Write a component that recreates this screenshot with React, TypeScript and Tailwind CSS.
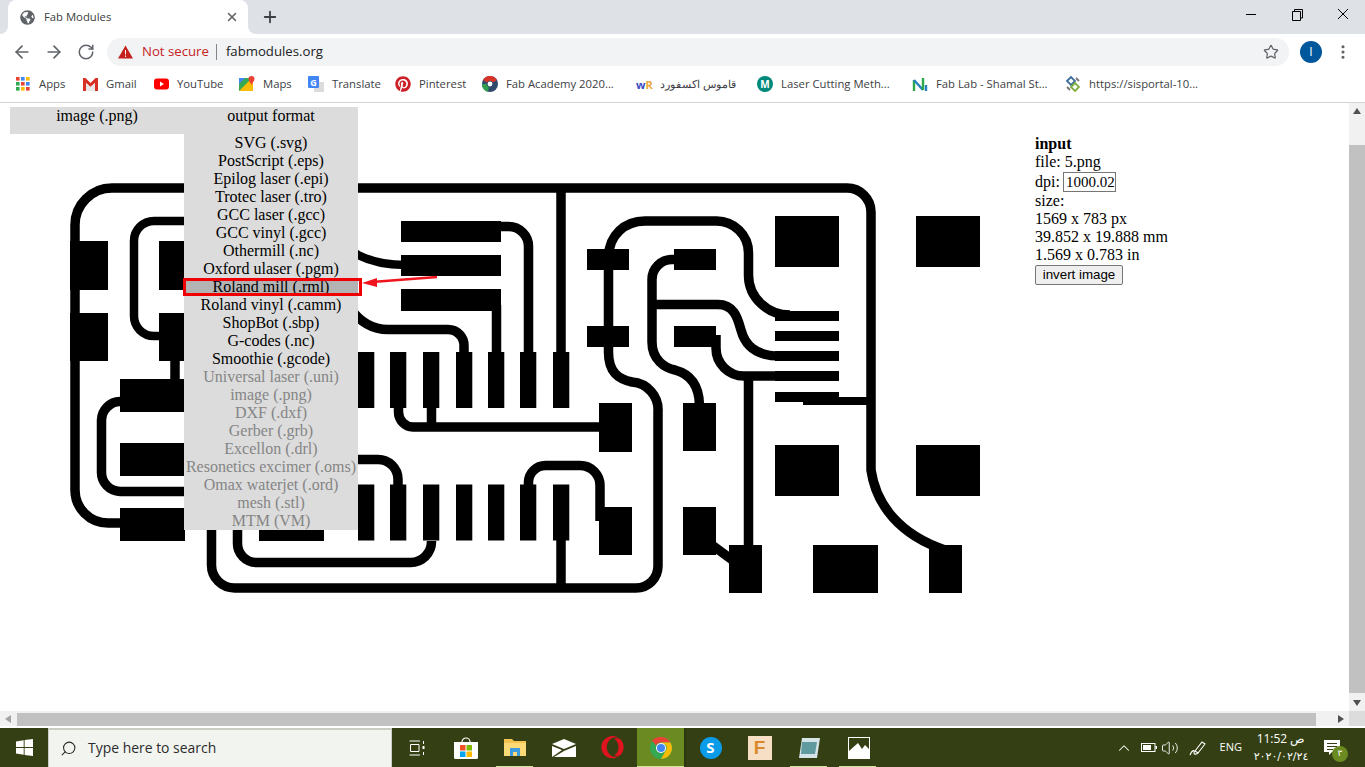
import { ArrowLeft, ArrowRight, ChevronUp, EllipsisVertical, Plus, RotateCw, Search, Star, Volume2, X } from "lucide-react";
import { FaGlobeAmericas, FaOpera, FaPinterest } from "react-icons/fa";

// ─── Board artwork ───────────────────────────────────────────────────────────

const pads: [number, number, number, number][] = [
  [70, 241, 38, 49], [70, 313, 38, 48], [159, 241, 50, 49], [159, 313, 50, 48],
  [120, 379, 66, 33], [120, 443, 66, 33], [120, 508, 65, 33],
  [401, 221, 100, 21], [401, 255, 100, 21], [401, 289, 100, 22],
  [587, 249, 42, 21], [587, 326, 42, 21], [674, 249, 42, 21], [674, 326, 42, 21],
  [599, 403, 33, 49], [599, 507, 33, 48], [683, 403, 33, 48], [683, 507, 33, 48],
  [775, 216, 64, 51], [916, 216, 64, 51], [775, 445, 64, 51], [916, 445, 64, 51],
  [775, 311, 64, 10], [775, 331, 64, 10], [775, 351, 64, 10], [775, 371, 64, 10], [775, 392, 64, 10],
  [803, 397, 64, 8],
  [729, 545, 33, 48], [813, 545, 65, 48], [929, 545, 33, 48],
  [259, 500, 65, 41],
];

const pinColumns = [358, 390, 423, 456, 488, 520, 553];

const traces = [
  "M75 361 V225 A37 37 0 0 1 112 188 H847 A24 24 0 0 1 871 212 V470 C876 505 900 535 945 550",
  "M75 361 V490 A33 33 0 0 0 108 523 H125",
  "M175 355 V385",
  "M125 401.5 H120 A19 19 0 0 0 101.5 420 V472 A19 19 0 0 0 120 491.5 H300 V459.5 H378 A20 20 0 0 1 398 479 V490",
  "M211.5 525 V565 A23 23 0 0 0 234.5 588 H636 A22 22 0 0 0 658 566 V412 A28 28 0 0 0 632 382 C618 379 608.5 372 608.5 352 V258 C608.5 235 625 221 645 221 H716 A32 32 0 0 1 748.5 253 V275 C748.5 298 768 315 790 315",
  "M237.5 525 V543 A19 19 0 0 0 256.5 562.5 H410 A21 21 0 0 0 431.5 541",
  "M501 226.5 H508 A20 20 0 0 1 528.5 247 V356",
  "M561 188 V356",
  "M496.5 305 V356",
  "M350 308 C362 325 375 329.5 388 329.5 H448 A16 16 0 0 1 464 346 V356",
  "M398.5 404 V412 A15 15 0 0 0 413 427 H605",
  "M431.5 404 V427",
  "M680 259.5 H672 A20 20 0 0 0 652 279.5 V342 C652 360 665 368 675 370 C690 374 699 385 699.5 405",
  "M652 304.6 H718 C735 304.6 738 320 741 330 C745 345 755 356 780 356",
  "M716 335 V348 A28 28 0 0 0 744 376 H780",
  "M748.5 376 V550",
  "M528.5 488 V482 A17 17 0 0 1 545.5 465.5 H580 A20 20 0 0 1 600 486 V521",
  "M561 538 V590",
  "M712 545 L735 562",
];

// this one is a touch thinner on the board
const thinTrace = "M165 336 H154 A20 20 0 0 1 134 316 V241 A20 20 0 0 1 154 221 H300 C330 221 340 245 358 255 C372 262 385 265 405 265";

function Board() {
  return (
    <svg className="absolute left-0 top-0" width="1349" height="608" viewBox="0 103 1349 608" aria-hidden>
      <path d={thinTrace} fill="none" stroke="#000" strokeWidth="8.5" />
      {traces.map((d, i) => (
        <path key={i} d={d} fill="none" stroke="#000" strokeWidth="9.5" />
      ))}
      {pads.map(([x, y, w, h], i) => (
        <rect key={i} x={x} y={y} width={w} height={h} fill="#000" />
      ))}
      {pinColumns.map((x) => (
        <g key={x}>
          <rect x={x} y={352} width={16.3} height={56} fill="#000" />
          <rect x={x} y={484.5} width={16.3} height={56} fill="#000" />
        </g>
      ))}
      {/* callout arrow */}
      <path d="M437 277 L372 282" stroke="#f0141e" strokeWidth="2.5" fill="none" />
      <path d="M362 283 L377 278 L377 287 Z" fill="#f0141e" />
    </svg>
  );
}

// ─── Fab modules menu ────────────────────────────────────────────────────────

const formats = [
  { name: "SVG (.svg)", on: true },
  { name: "PostScript (.eps)", on: true },
  { name: "Epilog laser (.epi)", on: true },
  { name: "Trotec laser (.tro)", on: true },
  { name: "GCC laser (.gcc)", on: true },
  { name: "GCC vinyl (.gcc)", on: true },
  { name: "Othermill (.nc)", on: true },
  { name: "Oxford ulaser (.pgm)", on: true },
  { name: "Roland mill (.rml)", on: true, picked: true },
  { name: "Roland vinyl (.camm)", on: true },
  { name: "ShopBot (.sbp)", on: true },
  { name: "G-codes (.nc)", on: true },
  { name: "Smoothie (.gcode)", on: true },
  { name: "Universal laser (.uni)", on: false },
  { name: "image (.png)", on: false },
  { name: "DXF (.dxf)", on: false },
  { name: "Gerber (.grb)", on: false },
  { name: "Excellon (.drl)", on: false },
  { name: "Resonetics excimer (.oms)", on: false },
  { name: "Omax waterjet (.ord)", on: false },
  { name: "mesh (.stl)", on: false },
  { name: "MTM (VM)", on: false },
];

function Menu() {
  return (
    <div className="absolute left-[10px] top-[4px] flex items-start text-center text-[16px] leading-[18px] text-black">
      <div className="h-[27px] w-[174px] bg-[#dcdcdc]">image (.png)</div>
      <div className="w-[174px] bg-[#dcdcdc]">
        <div className="h-[27px]">output format</div>
        {formats.map((f) => (
          <div
            key={f.name}
            className={`relative h-[18px] whitespace-nowrap ${f.on ? "" : "text-[#858585]"} ${f.picked ? "bg-[#b3b3b3]" : ""}`}
          >
            {f.name}
            {f.picked && <span className="absolute -left-px -right-[4px] top-0 h-[18px] border-[3px] border-[#f00000]" />}
          </div>
        ))}
      </div>
    </div>
  );
}

function InputPanel() {
  return (
    <div className="absolute left-[1035px] top-[32px] w-[160px] text-[16px] leading-[18px] text-black">
      <div className="font-bold">input</div>
      <div>file: 5.png</div>
      <div className="flex h-[21px] items-center">
        dpi:
        <span className="ml-[3px] flex h-[20px] w-[53px] items-center border border-[#767676] pl-[2px] text-[15px]">1000.02</span>
      </div>
      <div>size:</div>
      <div>1569 x 783 px</div>
      <div>39.852 x 19.888 mm</div>
      <div>1.569 x 0.783 in</div>
      <button className="mt-px flex h-[20px] w-[88px] items-center justify-center rounded-[2px] border border-[#767676] bg-[#efefef] font-['Liberation_Sans',sans-serif] text-[13.33px]">
        invert image
      </button>
    </div>
  );
}

// ─── Browser chrome ──────────────────────────────────────────────────────────

function TabStrip() {
  return (
    <div className="flex h-[34px] shrink-0 items-center bg-[#dee1e6]">
      <div className="relative ml-2 flex h-[34px] w-[240px] items-center self-end rounded-t-[8px] bg-white pl-3 pr-[9px]">
        <svg className="absolute -left-2 bottom-0" width="8" height="8" viewBox="0 0 8 8"><path d="M8 0 V8 H0 A8 8 0 0 0 8 0Z" fill="#fff" /></svg>
        <svg className="absolute -right-2 bottom-0" width="8" height="8" viewBox="0 0 8 8"><path d="M0 0 V8 H8 A8 8 0 0 1 0 0Z" fill="#fff" /></svg>
        <FaGlobeAmericas size={15} color="#5f6368" />
        <span className="ml-[9px] text-[11.3px] text-[#3c4043]">Fab Modules</span>
        <X className="ml-auto" size={14} strokeWidth={2.6} color="#5f6368" />
      </div>
      <Plus className="ml-[13px]" size={18} strokeWidth={2.4} color="#3c4043" />
      <div className="ml-auto -mr-px flex items-center self-start text-black">
        <svg width="46" height="28" viewBox="0 0 46 28"><path d="M18 14.5 H28" stroke="#000" strokeWidth="1" /></svg>
        <svg width="46" height="28" viewBox="0 0 46 28" fill="none" stroke="#000"><path d="M18.5 11.5 H26.5 V20.5 H18.5 Z M20.5 11.5 V9.5 H28.5 V18 H26.5" /></svg>
        <svg width="46" height="28" viewBox="0 0 46 28" fill="none" stroke="#000"><path d="M18 9 L28 19 M28 9 L18 19" /></svg>
      </div>
    </div>
  );
}

function Toolbar() {
  return (
    <div className="flex h-[34px] shrink-0 items-center bg-white pt-[2px]">
      <ArrowLeft className="ml-3" size={20} strokeWidth={2} color="#5f6368" />
      <ArrowRight className="ml-3" size={20} strokeWidth={2} color="#5f6368" />
      <RotateCw className="ml-[13px]" size={18} strokeWidth={2} color="#5f6368" />
      <div className="ml-3 flex h-[28px] w-[1182px] items-center rounded-full bg-[#f1f3f4] pl-[11px] pr-[10px] text-[13.2px]">
        <svg width="15" height="14" viewBox="0 0 15 14">
          <path d="M7.5 0.5 L15 13.5 H0 Z" fill="#c5221f" />
          <path d="M7 5 H8 V9.5 H7 Z M7 10.5 H8 V12 H7 Z" fill="#fff" />
        </svg>
        <span className="ml-[9px] text-[#c5221f]">Not secure</span>
        <span className="ml-[7px] h-[16px] w-px bg-[#80868b]" />
        <span className="ml-[9px] text-[#202124]">fabmodules.org</span>
        <Star className="ml-auto" size={16} strokeWidth={1.8} color="#5f6368" />
      </div>
      <span className="ml-[11px] flex h-[22px] w-[22px] items-center justify-center rounded-full bg-[#01579b] text-[12px] text-white">I</span>
      <EllipsisVertical className="ml-[12px]" size={18} strokeWidth={2.2} color="#5f6368" />
    </div>
  );
}

const dotColors = ["#ea4335", "#4285f4", "#fbbc05", "#34a853", "#ea4335", "#4285f4", "#34a853", "#fbbc05", "#ea4335"];

const bookmarks: { label: string; width: number; icon: React.ReactNode; dir?: "rtl" }[] = [
  {
    label: "Apps",
    width: 67,
    icon: (
      <svg width="14" height="14" viewBox="0 0 14 14">
        {dotColors.map((c, i) => (
          <rect key={i} x={(i % 3) * 5} y={Math.floor(i / 3) * 5} width="3.6" height="3.6" fill={c} />
        ))}
      </svg>
    ),
  },
  {
    label: "Gmail",
    width: 71,
    icon: (
      <svg width="15" height="14" viewBox="0 0 15 14">
        <path d="M0 1 H2.5 L7.5 6 L12.5 1 H15 V14 H12 V6 L7.5 10 L3 6 V14 H0 Z" fill="#d93025" />
        <path d="M3 6 L7.5 10 L12 6 V14 H3 Z" fill="#e8e8e8" />
      </svg>
    ),
  },
  {
    label: "YouTube",
    width: 86,
    icon: (
      <svg width="15" height="12" viewBox="0 0 15 12">
        <rect width="15" height="11" y="0.5" rx="3" fill="#f00" />
        <path d="M6 3.5 L10 6 L6 8.5 Z" fill="#fff" />
      </svg>
    ),
  },
  {
    label: "Maps",
    width: 69,
    icon: (
      <svg width="16" height="16" viewBox="0 0 16 16">
        <path d="M0 2 H12 V15 H0 Z" fill="#34a853" />
        <path d="M0 15 L11 4 H14 V15 Z" fill="#fbbc05" />
        <path d="M0 2 H6 L0 8 Z" fill="#4285f4" />
        <path d="M12.5 0 A3 3 0 0 1 15.5 3 C15.5 5 13.5 6.5 12.5 9 C11.5 6.5 9.5 5 9.5 3 A3 3 0 0 1 12.5 0Z" fill="#ea4335" />
      </svg>
    ),
  },
  {
    label: "Translate",
    width: 87,
    icon: (
      <span className="relative block h-[16px] w-[16px]">
        <span className="absolute bottom-0 right-0 h-[10px] w-[10px] bg-[#dcdcdc]" />
        <span className="absolute left-0 top-0 flex h-[12px] w-[11px] items-center justify-center rounded-[1px] bg-[#4285f4] text-[9px] font-bold leading-none text-white">G</span>
      </span>
    ),
  },
  { label: "Pinterest", width: 87, icon: <FaPinterest size={16} color="#cb2027" /> },
  {
    label: "Fab Academy 2020...",
    width: 154,
    icon: (
      <svg width="16" height="16" viewBox="0 0 16 16">
        <circle cx="8" cy="8" r="8" fill="#2f4a6b" />
        <path d="M1 4 A8 8 0 0 1 15 4 L11 6.5 A3.5 3.5 0 0 0 5 6.5 Z" fill="#d8352a" />
        <path d="M0 8 A8 8 0 0 0 6 15.7 L7 11 A3.5 3.5 0 0 1 4.6 8 Z" fill="#2e9e4f" />
        <circle cx="8" cy="8" r="2.4" fill="#fff" />
      </svg>
    ),
  },
  {
    label: "قاموس اكسفورد",
    width: 121,
    dir: "rtl",
    icon: (
      <span className="block w-[16px] whitespace-nowrap text-[11px] font-bold leading-none">
        <span className="text-[#3b48c4]">w</span>
        <span className="text-[#eda73a]">R</span>
      </span>
    ),
  },
  {
    label: "Laser Cutting Meth...",
    width: 155,
    icon: (
      <span className="flex h-[16px] w-[16px] items-center justify-center rounded-full bg-[#00897b] text-[10px] font-bold leading-none text-white">M</span>
    ),
  },
  {
    label: "Fab Lab - Shamal St...",
    width: 153,
    icon: (
      <svg width="16" height="16" viewBox="0 0 16 16" fill="none" strokeWidth="2.4">
        <path d="M2 15 V4" stroke="#2ba84a" />
        <path d="M2 4 L11 14" stroke="#2a7fc1" />
        <path d="M11 14 V2" stroke="#2ba84a" />
        <path d="M14 15 V9" stroke="#2a7fc1" />
      </svg>
    ),
  },
  {
    label: "https://sisportal-10...",
    width: 140,
    icon: (
      <svg width="16" height="16" viewBox="0 0 16 16" fill="none" strokeWidth="1.8">
        <path d="M2 5 L6 1 L10 5 L6 9 Z" stroke="#3f6f9f" />
        <path d="M6 11 L10 7 L14 11 L10 15 Z" stroke="#7fae3f" />
        <path d="M2 11 L5 14 M11 2 L14 5" stroke="#777" />
      </svg>
    ),
  },
];

function BookmarksBar() {
  return (
    <div className="flex h-[35px] shrink-0 items-center border-b border-[#d2d3d4] bg-white pb-[2px] pl-[15px] text-[11.3px] text-[#3c4043]">
      {bookmarks.map((b) => (
        <div key={b.label} className="flex shrink-0 items-center gap-[8px] whitespace-nowrap" style={{ width: b.width }}>
          <span className="flex w-[16px] justify-center">{b.icon}</span>
          <span dir={b.dir}>{b.label}</span>
        </div>
      ))}
    </div>
  );
}

function VerticalScrollbar() {
  return (
    <div className="flex w-[16px] shrink-0 flex-col items-center bg-[#f1f1f1]">
      <svg className="mt-[5px]" width="8" height="6" viewBox="0 0 8 6"><path d="M4 0 L8 6 H0 Z" fill="#505050" /></svg>
      <div className="mt-[31px] h-[548px] w-full bg-[#c1c1c1]" />
      <svg className="mt-[7px]" width="8" height="6" viewBox="0 0 8 6"><path d="M0 0 H8 L4 6 Z" fill="#505050" /></svg>
    </div>
  );
}

function HorizontalScrollbar() {
  return (
    <div className="flex h-[17px] shrink-0 flex-col bg-white">
      <div className="flex h-[15px] items-center bg-[#f1f1f1]">
        <svg className="ml-[5px]" width="6" height="8" viewBox="0 0 6 8"><path d="M6 0 V8 L0 4 Z" fill="#a3a3a3" /></svg>
        <div className="ml-[6px] h-[13px] w-[1299px] self-end bg-[#c1c1c1]" />
        <svg className="ml-[22px]" width="6" height="8" viewBox="0 0 6 8"><path d="M0 0 L6 4 L0 8 Z" fill="#505050" /></svg>
        <div className="ml-auto h-full w-[16px] bg-[#dcdcdc]" />
      </div>
    </div>
  );
}

// ─── Windows taskbar ─────────────────────────────────────────────────────────

function Tile({ active, bar, children }: { active?: boolean; bar?: boolean; children: React.ReactNode }) {
  return (
    <div className={`relative flex h-full w-[49px] shrink-0 items-center justify-center ${active ? "border-r-2 border-[#2c3610] bg-[#6b8a22]" : ""}`}>
      {children}
      {(bar || active) && <span className={`absolute bottom-0 h-[1px] bg-[#cfe39a] ${active ? "inset-x-0" : "inset-x-[6px]"}`} />}
    </div>
  );
}

function Taskbar() {
  return (
    <div className="flex h-[39px] shrink-0 items-center bg-[#343f14] font-['Open_Sans',sans-serif] text-white">
      <div className="flex h-full w-[48px] items-center justify-center">
        <svg width="17" height="17" viewBox="0 0 17 17" fill="#fff">
          <path d="M0 2.4 L7.7 1.2 V8 H0 Z M8.6 1 L17 0 V8 H8.6 Z M0 9 H7.7 V15.8 L0 14.6 Z M8.6 9 H17 V17 L8.6 15.9 Z" />
        </svg>
      </div>
      <div className="flex h-full w-[344px] items-center border-x border-t-2 border-[#c9cec4] border-b-0 bg-[#f2f4f0] pl-[11px] text-[#2b2b2b]">
        <Search className="-scale-x-100" size={17} strokeWidth={1.5} />
        <span className="ml-[11px] text-[13.95px]">Type here to search</span>
      </div>
      <div className="flex h-full w-[49px] items-center justify-center">
        <svg width="16" height="16" viewBox="0 0 16 16" fill="none" stroke="#fff">
          <path d="M0.5 1 H11 M0.5 15 H11 M1.5 4.5 H10 V11.5 H1.5 Z M14.5 1 V4 M14.5 12 V15" />
          <rect x="13.5" y="6" width="2" height="3" fill="#fff" stroke="none" />
        </svg>
      </div>
      <Tile>
        <svg width="24" height="24" viewBox="0 0 24 24">
          <path d="M8 6 A4 4 0 0 1 16 6" fill="none" stroke="#fff" strokeWidth="1.2" />
          <path d="M0 6 H24 V22 A1.5 1.5 0 0 1 22.5 23 H1.5 A1.5 1.5 0 0 1 0 22 Z" fill="#fff" />
          <rect x="6" y="9" width="5.5" height="5.5" fill="#f25022" />
          <rect x="12.5" y="9" width="5.5" height="5.5" fill="#7fba00" />
          <rect x="6" y="15.5" width="5.5" height="5.5" fill="#00a4ef" />
          <rect x="12.5" y="15.5" width="5.5" height="5.5" fill="#ffb900" />
        </svg>
      </Tile>
      <Tile bar>
        <svg width="22" height="18" viewBox="0 0 22 18">
          <path d="M0 0 H8 L10 2 H22 V17 H0 Z" fill="#f3c24f" />
          <path d="M0 4 H22 V17 H0 Z" fill="#fcd977" />
          <path d="M6 9 H16 V17 H13 V13 H9 V17 H6 Z" fill="#3d9be0" />
        </svg>
      </Tile>
      <Tile>
        <svg width="24" height="18" viewBox="0 0 24 18">
          <path d="M0 5 L12 0 L24 5 L12 10 Z" fill="#fff" />
          <path d="M0 7 L10 11 L0 18 Z M24 7 V18 H2 L12 12 Z" fill="#fff" />
        </svg>
      </Tile>
      <Tile>
        <FaOpera size={23} color="#e0141e" />
      </Tile>
      <Tile active>
        <svg width="22" height="22" viewBox="0 0 22 22">
          <circle cx="11" cy="11" r="11" fill="#34a853" />
          <path d="M11 0 A11 11 0 0 1 20.5 5.5 L11 5.5 A5.5 5.5 0 0 0 6 8.5 L2 3.6 A11 11 0 0 1 11 0Z" fill="#ea4335" />
          <path d="M20.5 5.5 A11 11 0 0 1 11 22 L15.5 14 A5.5 5.5 0 0 0 16 8 L11 5.5 Z" fill="#fbbc05" />
          <circle cx="11" cy="11" r="5" fill="#fff" />
          <circle cx="11" cy="11" r="4" fill="#4285f4" />
        </svg>
      </Tile>
      <Tile>
        <span className="flex h-[22px] w-[22px] items-center justify-center rounded-full bg-[#0a9ce8] text-[15px] font-bold leading-none text-white">S</span>
      </Tile>
      <Tile>
        <span className="flex h-[24px] w-[24px] items-center justify-center bg-[#f6dfc4] font-['Liberation_Sans',sans-serif] text-[19px] font-bold leading-none text-[#d98a2b]">F</span>
      </Tile>
      <Tile bar>
        <svg width="22" height="22" viewBox="0 0 22 22">
          <path d="M4 1 H22 L19 21 H1 Z" fill="#d5e4e6" />
          <path d="M4 5 H19 L17 17 H3 Z" fill="#5f9a9e" />
        </svg>
      </Tile>
      <Tile bar>
        <svg className="ml-[2px]" width="22" height="22" viewBox="0 0 22 22">
          <path d="M0 0 H22 V22 H0 Z" fill="#fff" />
          <path d="M1 1 H21 V12 L17 8 L14 12 L10 6 L1 14 Z" fill="#343f14" />
        </svg>
      </Tile>
      <div className="ml-auto flex h-full items-center">
        <ChevronUp size={18} strokeWidth={1.4} />
        <svg className="ml-[8px]" width="16" height="9" viewBox="0 0 16 9" fill="none">
          <rect x="0.5" y="0.5" width="13.5" height="8" stroke="#fff" />
          <rect x="2" y="2" width="8" height="5" fill="#fff" />
          <rect x="14.5" y="3" width="1.5" height="3" fill="#fff" />
        </svg>
        <Volume2 className="ml-[4px]" size={18} strokeWidth={1.2} />
        <svg className="ml-[10px]" width="18" height="16" viewBox="0 0 18 16" fill="none" stroke="#fff" strokeWidth="1.1">
          <path d="M6 11 L13 2 L16 4 L9 13 Z M1 15 C3 10 6 9 5 13 C5 15 8 14 9 13" />
        </svg>
        <span className="ml-[13px] text-[11px]">ENG</span>
        <div className="ml-[12px] flex w-[54px] flex-col items-center text-[12px] leading-[18px]">
          <span dir="rtl" className="whitespace-nowrap">ص 11:52</span>
          <span className="whitespace-nowrap font-['DejaVu_Sans',sans-serif] text-[11px]">٢٠٢٠/٠٢/٢٤</span>
        </div>
        <div className="relative ml-[16px] mr-[25px] h-[16px] w-[16px]">
          <svg width="16" height="16" viewBox="0 0 16 16">
            <path d="M0 0 H16 V12 H8 L5 15 V12 H0 Z" fill="#fff" />
            <path d="M3 3.5 H13 M3 6.5 H13 M3 9.5 H9" stroke="#343f14" />
          </svg>
          <span className="absolute -bottom-[6px] -right-[8px] flex h-[16px] w-[16px] items-center justify-center rounded-full bg-[#6b8a22] font-['DejaVu_Sans',sans-serif] text-[9px] leading-none">٣</span>
        </div>
      </div>
    </div>
  );
}

export default function App() {
  return (
    <div className="flex h-[767px] w-[1365px] flex-col overflow-hidden bg-white font-['Open_Sans',sans-serif]">
      <TabStrip />
      <Toolbar />
      <BookmarksBar />
      <div className="flex h-[608px] shrink-0">
        <div className="relative flex-1 overflow-hidden bg-white font-['Liberation_Serif',serif]">
          <Board />
          <Menu />
          <InputPanel />
        </div>
        <VerticalScrollbar />
      </div>
      <HorizontalScrollbar />
      <Taskbar />
    </div>
  );
}
